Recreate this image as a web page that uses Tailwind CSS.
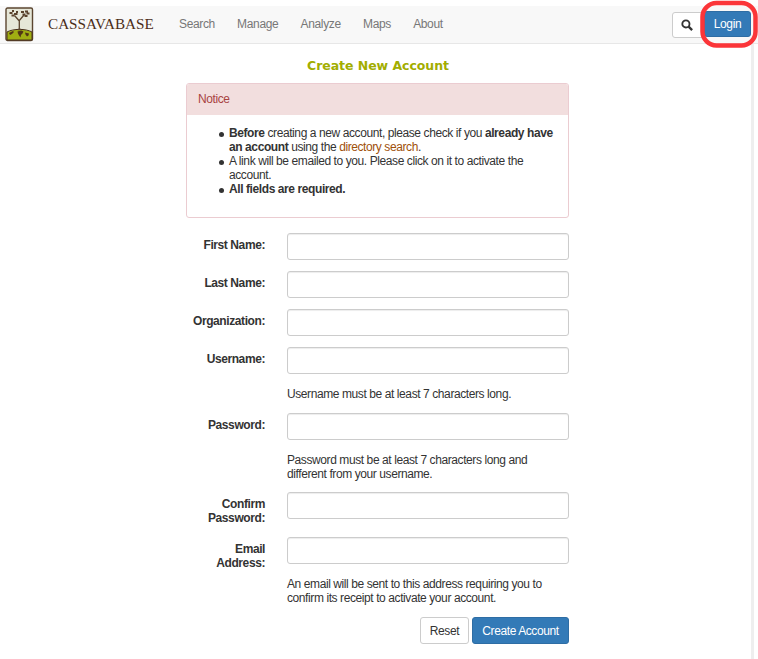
<!DOCTYPE html>
<html lang="en">
<head>
<meta charset="utf-8">
<title>Cassavabase</title>
<script src="https://cdn.jsdelivr.net/npm/@tailwindcss/browser@4"></script>
</head>
<body class="relative w-[758px] h-[659px] overflow-hidden bg-white text-[#333] text-[12px] tracking-[-0.41px] leading-[14px] font-['Liberation_Sans',Arial,sans-serif]">
<header class="mt-[6px] h-[38px] flex items-center bg-[#f8f8f8] border-b border-[#e7e7e7] pl-[5px] pr-[6px]">
  <svg class="w-[29px] h-[35px] shrink-0" viewBox="0 0 29 35">
    <rect x="1" y="1" width="26.500" height="32.500" rx="1.500" fill="#e6e7d8" stroke="#5b452f" stroke-width="1.400"/>
    <path d="M2 25C8 21.500 21 21.500 27 25V33H2Z" fill="#a0ae12" stroke="#4a321d" stroke-width="1"/>
    <path d="M4 26l4-2 1 1-2 2-2 1zM12.500 24.500l4-1 2 1-1 2-1.500 1.500-.5 2.500-1.500-2-1-2zM20 25.500l4 1-.5 2-1.500 1-1.500-2z" fill="#503516"/>
    <path d="M14.300 23V14M14.300 14L9.500 8.500M14.300 13.500L19 8M13 22.500h3" stroke="#5b452f" stroke-width="1.300" fill="none"/>
    <path d="M4.500 6h3M7 4h2M9 7h3.500M6.500 8.500h3M16 5h3M20 4.500h3M17.500 7.500h3M21.500 6.500h3M19.500 9h3M11 5h2" stroke="#5a432d" stroke-width="1.800" fill="none"/>
  </svg>
  <span class="ml-[14px] w-[106px] whitespace-nowrap text-[15.2px] tracking-[0px] leading-5 text-[#4b2e18] font-['Liberation_Serif',serif] relative -top-px">CASSAVABASE</span>
  <nav class="flex ml-[25px] text-[#777] gap-[22.2px] whitespace-nowrap relative -top-px tracking-[-0.35px]">
    <a>Search</a><a>Manage</a><a>Analyze</a><a>Maps</a><a>About</a>
  </nav>
  <button class="ml-auto w-[32px] h-[26px] rounded-[3px] border border-[#ccc] bg-white flex items-center justify-center">
    <svg class="w-[12px] h-[12px] relative right-px" viewBox="0 0 11 11" fill="none" stroke="#333"><circle cx="4.500" cy="4.500" r="3.300" stroke-width="1.700"/><path d="M7 7l3.200 3.200" stroke-width="2.100"/></svg>
  </button>
  <button class="w-[47px] mr-px h-[26px] relative -top-px rounded-[3px] border border-[#2e6da4] bg-[#337ab7] text-white whitespace-nowrap">Login</button>
</header>
<div class="absolute left-[751px] top-[44px] w-[3px] h-[615px] bg-[#eee]"></div>
<svg class="absolute left-[698px] top-0 w-[60px] h-[50px]" viewBox="0 0 60 50"><rect x="4.500" y="3" width="53" height="42.500" rx="14" fill="none" stroke="#fb3539" stroke-width="4.500"/></svg>
<main class="w-[383px] ml-[186px]">
  <h1 class="h-[39px] pt-[15px] pl-px text-center font-bold text-[12.500px] tracking-[-0.05px] text-[#a2ad00] font-['DejaVu_Sans',sans-serif]">Create New Account</h1>
  <section class="h-[135px] rounded-[3px] border border-[#ebccd1] overflow-hidden">
    <div class="h-[31px] bg-[#f2dede] text-[#a94442] pl-[11px] pt-[8px]">Notice</div>
    <ul class="pl-[42px] pt-[11px] whitespace-nowrap">
      <li class="relative before:content-[''] before:absolute before:-left-[10px] before:top-[6px] before:size-[4.5px] before:rounded-full before:bg-[#333]"><b>Before</b> creating a new account, please check if you <b>already have<br>an account</b> using the <a class="text-[#a0500a]">directory search</a>.</li>
      <li class="relative before:content-[''] before:absolute before:-left-[10px] before:top-[6px] before:size-[4.5px] before:rounded-full before:bg-[#333]">A link will be emailed to you. Please click on it to activate the<br>account.</li>
      <li class="relative before:content-[''] before:absolute before:-left-[10px] before:top-[6px] before:size-[4.5px] before:rounded-full before:bg-[#333]"><b>All fields are required.</b></li>
    </ul>
  </section>
  <form class="grid grid-cols-[79px_282px] gap-x-[22px] pt-[15px]">
    <label class="h-[38px] pt-[5px] text-right font-bold">First Name:</label><input class="h-[27px] rounded-[3px] border border-[#ccc] shadow-[inset_0_1px_1px_rgba(0,0,0,0.075)]">
    <label class="h-[38px] pt-[5px] text-right font-bold">Last Name:</label><input class="h-[27px] rounded-[3px] border border-[#ccc] shadow-[inset_0_1px_1px_rgba(0,0,0,0.075)]">
    <label class="h-[38px] pt-[5px] text-right font-bold">Organization:</label><input class="h-[27px] rounded-[3px] border border-[#ccc] shadow-[inset_0_1px_1px_rgba(0,0,0,0.075)]">
    <label class="h-[66px] pt-[5px] text-right font-bold">Username:</label><div><input class="block w-full h-[27px] rounded-[3px] border border-[#ccc] shadow-[inset_0_1px_1px_rgba(0,0,0,0.075)]"><p class="mt-[13px] whitespace-nowrap">Username must be at least 7 characters long.</p></div>
    <label class="h-[79px] pt-[5px] text-right font-bold">Password:</label><div><input class="block w-full h-[27px] rounded-[3px] border border-[#ccc] shadow-[inset_0_1px_1px_rgba(0,0,0,0.075)]"><p class="mt-[13px] whitespace-nowrap">Password must be at least 7 characters long and<br>different from your username.</p></div>
    <label class="h-[45px] pt-[5px] text-right font-bold">Confirm<br>Password:</label><input class="h-[27px] rounded-[3px] border border-[#ccc] shadow-[inset_0_1px_1px_rgba(0,0,0,0.075)]">
    <label class="h-[80px] pt-[5px] text-right font-bold">Email<br>Address:</label><div><input class="block w-full h-[27px] rounded-[3px] border border-[#ccc] shadow-[inset_0_1px_1px_rgba(0,0,0,0.075)]"><p class="mt-[13px] whitespace-nowrap">An email will be sent to this address requiring you to<br>confirm its receipt to activate your account.</p></div>
    <div class="col-span-2 flex justify-end gap-[3px]">
      <button type="button" class="w-[49px] h-[27px] rounded-[3px] border border-[#ccc] bg-white">Reset</button>
      <button type="button" class="w-[97px] h-[27px] rounded-[3px] border border-[#2e6da4] bg-[#337ab7] text-white whitespace-nowrap">Create Account</button>
    </div>
  </form>
</main>
</body>
</html>
